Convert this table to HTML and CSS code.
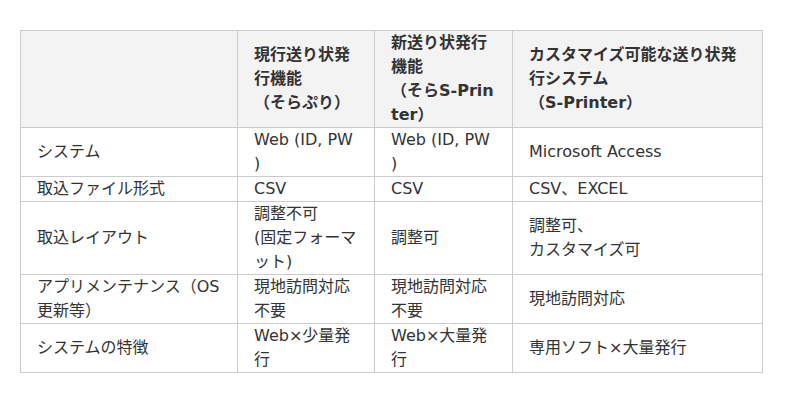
FILE: index.html
```html
<!DOCTYPE html>
<html lang="ja">
<head>
<meta charset="utf-8">
<link rel="stylesheet" href="styles.css">
</head>
<body>
<div class="wrap">
<table class="cmp">
<colgroup>
<col class="c1"><col class="c2"><col class="c3"><col class="c4">
</colgroup>
<thead>
<tr>
<th></th>
<th>現行送り状発行機能<br>（そらぷり）</th>
<th>新送り状発行機能<br>（そらS-Printer）</th>
<th>カスタマイズ可能な送り状発行システム<br>（S-Printer）</th>
</tr>
</thead>
<tbody>
<tr><td>システム</td><td>Web (ID, PW<br>)</td><td>Web (ID, PW<br>)</td><td>Microsoft Access</td></tr>
<tr><td>取込ファイル形式</td><td>CSV</td><td>CSV</td><td>CSV、EXCEL</td></tr>
<tr><td>取込レイアウト</td><td>調整不可<br>(固定フォーマット)</td><td>調整可</td><td>調整可、<br>カスタマイズ可</td></tr>
<tr><td>アプリメンテナンス（OS更新等）</td><td>現地訪問対応不要</td><td>現地訪問対応不要</td><td>現地訪問対応</td></tr>
<tr><td>システムの特徴</td><td>Web×少量発行</td><td>Web×大量発行</td><td>専用ソフト×大量発行</td></tr>
</tbody>
</table>
</div>
</body>
</html>
```
FILE: styles.css
```css
html, body {
  margin: 0;
  padding: 0;
  background: #fff;
}
.wrap {
  padding: 30px 20px;
}
.cmp {
  border-collapse: collapse;
  table-layout: fixed;
  width: 742px;
  font-family: "DejaVu Sans", "Noto Sans CJK JP", sans-serif;
  font-size: 16px;
  line-height: 24px;
  color: #333;
}
.c1 { width: 217px; }
.c2 { width: 137px; }
.c3 { width: 138px; }
.c4 { width: 250px; }
.cmp th, .cmp td {
  border: 1px solid #ccc;
  padding: 0 14px 0 16px;
  vertical-align: middle;
  text-align: left;
  word-break: break-all;
}
.cmp th {
  background: #f3f3f3;
  font-weight: bold;
}
```
